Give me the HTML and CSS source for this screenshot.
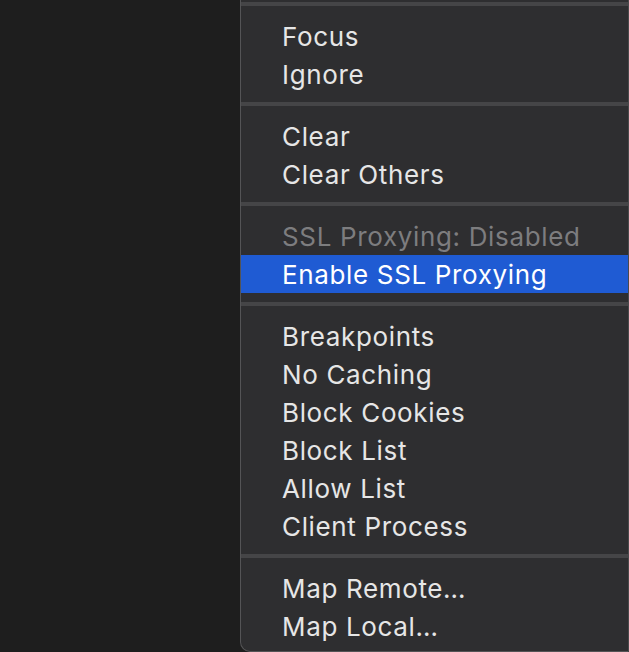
FILE: index.html
```html
<!DOCTYPE html>
<html>
<head>
<meta charset="utf-8">
<link rel="stylesheet" href="styles.css">
</head>
<body>
<div class="menu">
  <div class="sep sep-top"></div>
  <div class="item">Focus</div>
  <div class="item">Ignore</div>
  <div class="sep"></div>
  <div class="item">Clear</div>
  <div class="item">Clear Others</div>
  <div class="sep"></div>
  <div class="item disabled">SSL Proxying: Disabled</div>
  <div class="item selected">Enable SSL Proxying</div>
  <div class="sep"></div>
  <div class="item">Breakpoints</div>
  <div class="item">No Caching</div>
  <div class="item">Block Cookies</div>
  <div class="item">Block List</div>
  <div class="item">Allow List</div>
  <div class="item">Client Process</div>
  <div class="sep"></div>
  <div class="item">Map Remote…</div>
  <div class="item">Map Local…</div>
</div>
</body>
</html>
```
FILE: styles.css
```css
html, body {
  margin: 0;
  padding: 0;
  background: #1e1e1e;
  height: 652px;
  overflow: hidden;
}
.menu {
  margin-left: 240px;
  width: 389px;
  box-sizing: border-box;
  height: 652px;
  background: #2e2e30;
  border-left: 1px solid #545456;
  border-right: 1px solid #4a4a4c;
  border-bottom: 1px solid #545456;
  border-bottom-left-radius: 10px;
  padding-top: 2px;
  font-family: Inter, "Noto Sans", sans-serif;
  font-size: 26px;
  letter-spacing: 0.65px;
  color: #e6e6e6;
  display: flex;
  flex-direction: column;
}
.item {
  box-sizing: border-box;
  height: 38px;
  padding-top: 1px;
  line-height: 37px;
  padding-left: 41px;
  white-space: nowrap;
}
.item.disabled {
  color: #7d7d7f;
}
.item.selected {
  background: #1f5bd3;
  color: #ffffff;
}
.sep {
  height: 4px;
  background: #454547;
  margin: 9px 0 11px;
}
.sep.sep-top {
  margin-top: 0;
}
```
